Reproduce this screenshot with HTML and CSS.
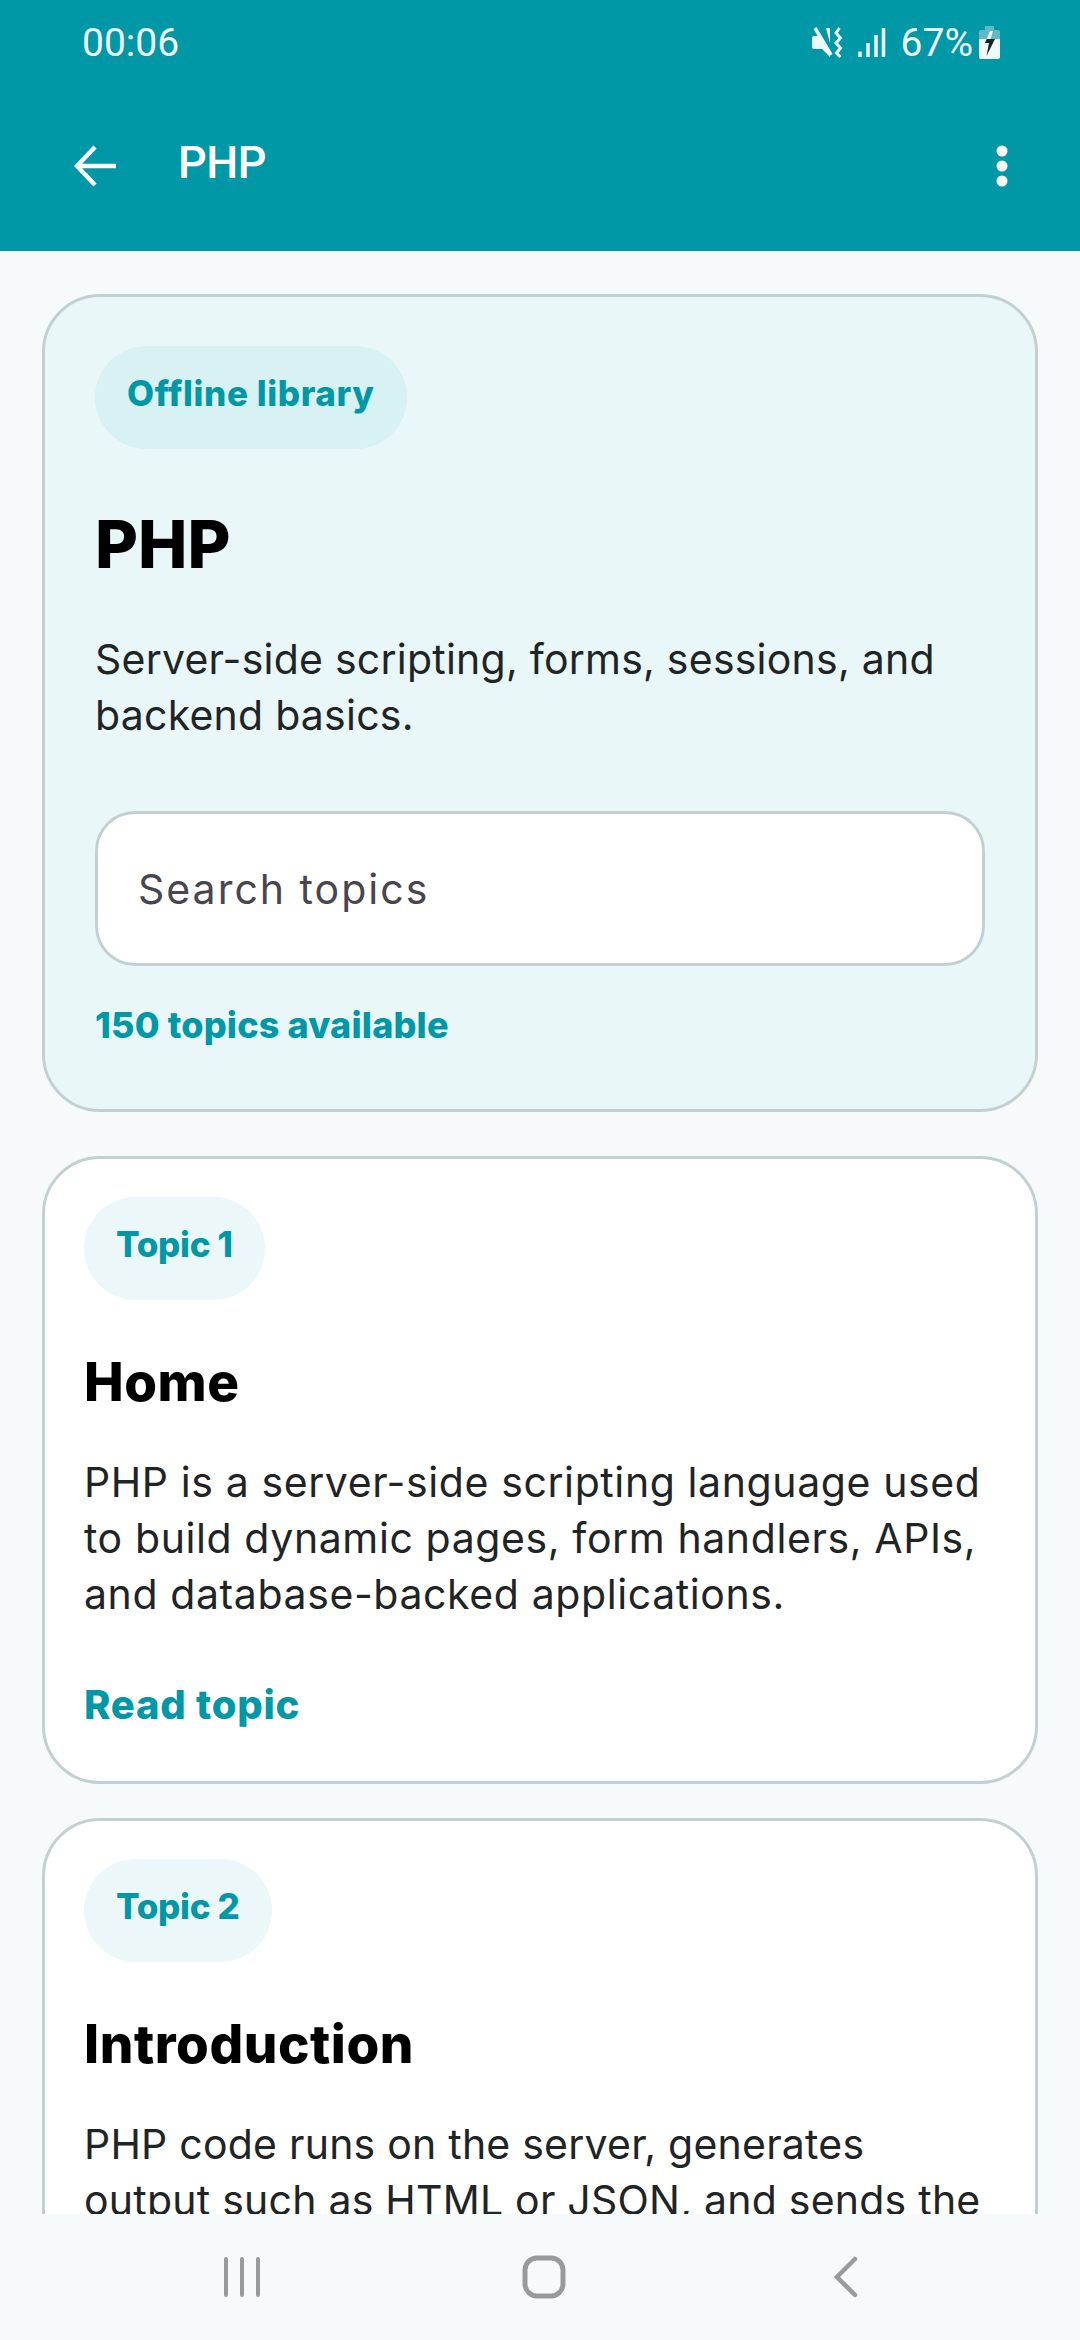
FILE: index.html
```html
<!DOCTYPE html>
<html lang="en">
<head>
<meta charset="utf-8">
<title>PHP</title>
<link rel="stylesheet" href="styles.css">
</head>
<body>
<div class="screen">
  <header class="appbar">
    <div class="status">
      <span class="time">00:06</span>
      <div class="status-right">
        <svg class="ic-mute" viewBox="0 0 32 32" width="32" height="32"><path d="M2 10H6L18 24V31L10 23H2Q0 23 0 21V12Q0 10 2 10Z" fill="#eefafa"/><path d="M14 2H18V17Z" fill="#eefafa"/><path d="M3 2L19 29" stroke="#eefafa" stroke-width="3.500" fill="none"/><path d="M27.500 2L24 7L28.500 12L24 17L28.500 22L24.500 27L28.500 31" fill="none" stroke="#eefafa" stroke-width="3"/></svg>
        <svg class="ic-signal" viewBox="0 0 28 29" width="28" height="29"><path d="M2 23.500V29M10 15V29M18 7V29M25.500 0V29" stroke="#eefafa" stroke-width="3.500" fill="none"/></svg>
        <span class="pct">67%</span>
        <svg class="ic-batt" viewBox="0 0 21 33" width="21" height="33"><defs><clipPath id="bl"><rect x="0" y="13" width="21" height="20"/></clipPath></defs><path d="M6 0h9v5H6z" fill="#5fb9c6"/><path d="M2 4h17q2 0 2 2v8H0V6q0-2 2-2z" fill="#5fb9c6"/><path d="M0 13h21v18q0 2-2 2H2q-2 0-2-2z" fill="#eefafa"/><path d="M11 5L6 17H10L7.500 30L16 13H11.500L14 5Z" fill="#eefafa"/><path d="M11 5L6 17H10L7.500 30L16 13H11.500L14 5Z" fill="#1c2326" clip-path="url(#bl)"/></svg>
      </div>
    </div>
    <div class="toolbar">
      <svg class="ic-back" viewBox="0 0 44 44" width="44" height="44"><path d="M3 22H42M21 3L3 22L21 41" fill="none" stroke="#fff" stroke-width="4.500"/></svg>
      <span class="title">PHP</span>
      <svg class="ic-more" viewBox="0 0 12 44" width="12" height="44"><circle cx="6" cy="7" r="5.500" fill="#fff"/><circle cx="6" cy="22" r="5.500" fill="#fff"/><circle cx="6" cy="37" r="5.500" fill="#fff"/></svg>
    </div>
  </header>
  <main class="content">
    <section class="card hero">
      <span class="chip chip-hero">Offline library</span>
      <h1 class="hero-title">PHP</h1>
      <p class="desc">Server-side scripting, forms, sessions, and backend basics.</p>
      <div class="search">Search topics</div>
      <div class="count">150 topics available</div>
    </section>
    <section class="card topic topic-first">
      <span class="chip">Topic 1</span>
      <h2 class="topic-title">Home</h2>
      <p class="desc">PHP is a server-side scripting language used to build dynamic pages, form handlers, APIs, and database-backed applications.</p>
      <div class="read">Read topic</div>
    </section>
    <section class="card topic">
      <span class="chip">Topic 2</span>
      <h2 class="topic-title">Introduction</h2>
      <p class="desc">PHP code runs on the server, generates output such as HTML or JSON, and sends the result to the browser.</p>
    </section>
  </main>
  <nav class="navbar">
    <svg viewBox="0 0 40 42" width="40" height="42"><path d="M4 3V39M20 3V39M36 3V39" stroke="#979b9c" stroke-width="4" stroke-linecap="round" fill="none"/></svg>
    <svg viewBox="0 0 44 44" width="44" height="44"><rect x="3" y="3" width="38" height="38" rx="12" fill="none" stroke="#979b9c" stroke-width="5"/></svg>
    <svg viewBox="0 0 24 42" width="24" height="42"><path d="M21 3L3 21L21 39" stroke="#979b9c" stroke-width="4.500" stroke-linecap="round" fill="none"/></svg>
  </nav>
</div>
</body>
</html>
```

FILE: styles.css
```css
* { box-sizing: border-box; }
html, body { margin: 0; padding: 0; }
body { width: 1080px; height: 2340px; overflow: hidden; font-family: "Inter", "Liberation Sans", sans-serif; background: #f6fafb; }
.screen { width: 1080px; height: 2340px; display: flex; flex-direction: column; overflow: hidden; }
.appbar { flex: none; height: 251px; background: #0097a7; color: #fff; display: flex; flex-direction: column; }
.status { height: 84px; padding: 0 0 0 82px; display: flex; justify-content: space-between; align-items: center; font-family: "Roboto", sans-serif; font-size: 39px; color: #eefafa; }
.time, .pct { padding-top: 2px; }
.status-right { display: flex; align-items: center; padding-right: 80px; }
.ic-signal { margin-left: 14px; }
.pct { margin-left: 15px; }
.ic-batt { margin-left: 6px; }
.toolbar { height: 164px; padding: 0 72px 0 74px; display: flex; align-items: center; }
.title { margin-left: 60px; padding-bottom: 8px; font-family: "Roboto", sans-serif; font-size: 45px; font-weight: 500; letter-spacing: -0.5px; flex: 1; }
.content { flex: 1; min-height: 0; overflow: hidden; padding: 43px 42px 0; display: flex; flex-direction: column; gap: 34px; }
.card { flex: none; border: 3px solid #c3d0d2; border-radius: 58px; background: #fff; }
.hero { background: #e9f7f8; height: 818px; padding: 49px 50px 0; margin-bottom: 10px; }
.topic { padding: 38px 39px 0; }
.topic-first { height: 628px; }
.chip { display: block; width: fit-content; height: 103px; line-height: 94px; padding: 0 32px; border-radius: 52px; background: #ecf7f9; color: #0097a7; font-size: 35px; font-weight: 800; letter-spacing: -0.3px; }
.chip-hero { background: #d8f1f3; letter-spacing: 0.6px; }
.hero-title { margin: 53px 0 0; font-size: 66px; line-height: 84px; font-weight: 800; color: #000; }
.topic-title { margin: 46px 0 0; font-size: 53px; line-height: 72px; font-weight: 800; letter-spacing: 0.55px; color: #000; }
.desc { margin: 45px 0 0; font-size: 41px; line-height: 56px; letter-spacing: 0.23px; color: #1f2426; }
.topic .desc { margin-top: 36px; }
.topic-first .desc { letter-spacing: 0.6px; }
.search { margin-top: 68px; height: 155px; border: 3px solid #c3d0d2; border-radius: 40px; background: #fff; padding: 0 40px; display: flex; align-items: center; font-size: 41px; color: #49454f; letter-spacing: 2px; }
.count { margin-top: 37px; font-size: 36px; font-weight: 800; letter-spacing: 0.15px; color: #0097a7; }
.read { margin-top: 58px; font-size: 40px; font-weight: 800; letter-spacing: 0.75px; color: #0097a7; }
.navbar { flex: none; height: 126px; background: #f6fafb; display: grid; grid-template-columns: repeat(3, 302px); justify-items: center; align-items: center; padding: 0 0 0 91px; }
```
